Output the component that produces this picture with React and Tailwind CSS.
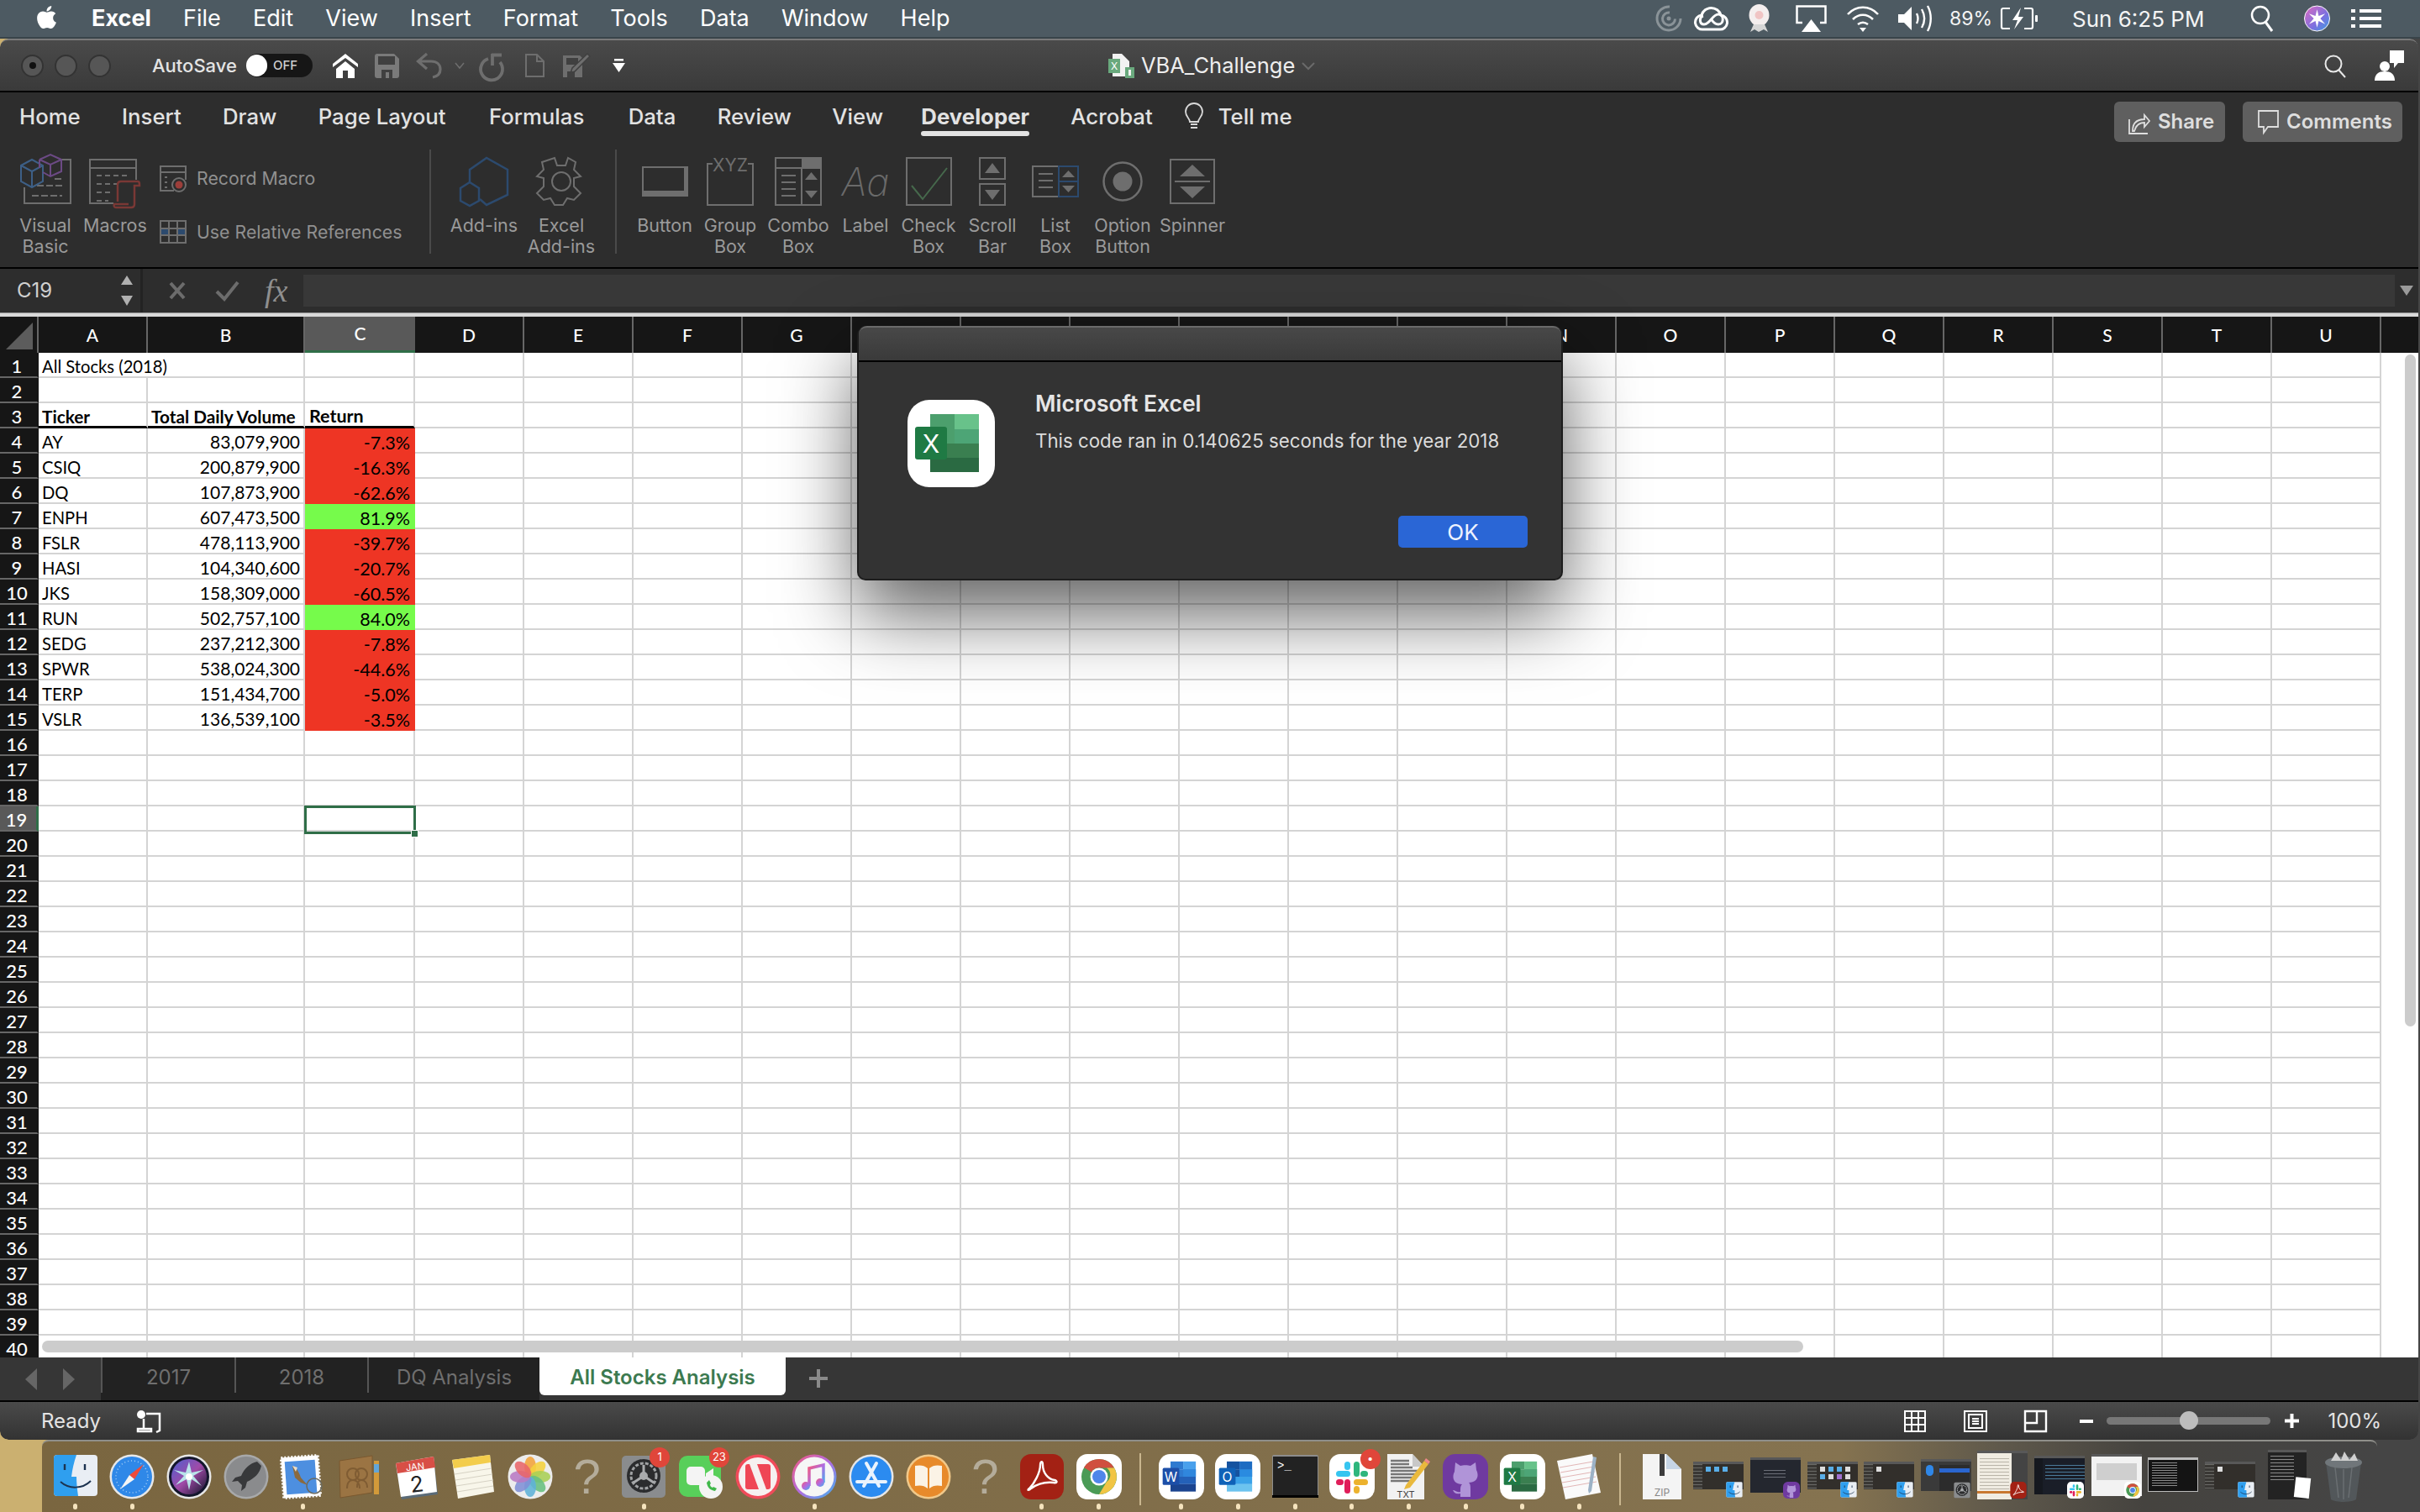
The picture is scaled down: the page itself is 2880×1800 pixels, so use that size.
import React from "react";
import { FaApple } from "react-icons/fa";

const UI = "font-['Inter','Liberation_Sans',sans-serif]";
const G = "#6e6e6e";

const Svg = ({ w, h, vb, children, className = "" }) => (
  <svg width={w} height={h} viewBox={vb || `0 0 ${w} ${h}`} fill="none" className={`shrink-0 overflow-visible ${className}`}>{children}</svg>
);

/* ---------- Office style dock / dialog icon ---------- */
const Office = ({ size = 54, bands, box, letter }) => (
  <Svg w={size} h={size} vb="0 0 104 104">
    <rect x="0" y="0" width="104" height="104" rx="26" fill="#fff" />
    <rect x="27" y="17" width="29" height="18" fill={bands[1]} />
    <rect x="56" y="17" width="29" height="18" fill={bands[0]} />
    <rect x="27" y="35" width="58" height="17" fill={bands[1]} />
    <rect x="56" y="35" width="29" height="17" fill={bands[2]} />
    <rect x="27" y="52" width="58" height="17" fill={bands[3]} />
    <rect x="27" y="69" width="58" height="17" fill={bands[4]} />
    <rect x="9" y="32" width="38" height="39" rx="3" fill={box} />
    <text x="28" y="63" textAnchor="middle" fontSize="30" fontFamily="Inter, sans-serif" fill="#fff">{letter}</text>
  </Svg>
);
const ExcelIco = ({ size }) => <Office size={size} letter="X" box="#1f7a44" bands={["#68c28a", "#4c9f6d", "#4da576", "#3a7f50", "#2a6a42"]} />;

/* ---------- dock icons ---------- */
const D = ({ children }) => <Svg w={54} h={54} vb="0 0 54 54">{children}</Svg>;
const Finder = () => (
  <D>
    <rect x="1" y="1" width="52" height="49" rx="4" fill="#e9eef4" />
    <path d="M5 1h23c-3 9-5 17-6 26h6c0 8 1 15 2 23H5a4 4 0 0 1-4-4V5a4 4 0 0 1 4-4z" fill="#2f9fef" />
    <path d="M14 12v7M38 12v7" stroke="#1c3350" strokeWidth="2.4" />
    <path d="M9 33c10 9 26 9 36-1" stroke="#1c3350" strokeWidth="2" />
  </D>
);
const Safari = () => (
  <D>
    <circle cx="27" cy="27" r="26.5" fill="#e8e8e8" />
    <circle cx="27" cy="27" r="24" fill="#2f88e8" />
    <circle cx="27" cy="27" r="19" stroke="#a8d0f7" strokeWidth="1.5" strokeDasharray="1 3" />
    <path d="M41 12 24 25l6 5z" fill="#ef4a3a" />
    <path d="M13 42l11-17 6 5z" fill="#f5f5f5" />
  </D>
);
const Siri = () => (
  <D>
    <defs>
      <linearGradient id="sg" x1="0" y1="0" x2="1" y2="1"><stop offset="0" stopColor="#4d5fd0" /><stop offset=".5" stopColor="#a04aa8" /><stop offset="1" stopColor="#101528" /></linearGradient>
    </defs>
    <circle cx="27" cy="27" r="26.5" fill="#e6e6e6" />
    <circle cx="27" cy="27" r="24" fill="#13162c" />
    <circle cx="27" cy="27" r="21" fill="url(#sg)" />
    <path d="M27 9l3 13 14-3-12 7 10 12-12-8-3 13-3-13-13 7 10-11-12-7 14 3z" fill="#bdf3ef" opacity=".9" />
    <circle cx="27" cy="27" r="4" fill="#fff" />
  </D>
);
const Launch = () => (
  <D>
    <circle cx="27" cy="27" r="26.5" fill="#a8a9aa" />
    <circle cx="27" cy="27" r="24" fill="#8a8b8d" />
    <path d="M40 9c-9 2-15 8-19 17l-7 2-4 5 7-1 5 5-1 7 5-4 2-7c9-4 15-10 17-19z" fill="#38393b" />
  </D>
);
const Mail = () => (
  <D>
    <rect x="3" y="3" width="44" height="48" fill="#fff" transform="rotate(-4 25 27)" strokeDasharray="2 2" stroke="#fff" strokeWidth="3" />
    <rect x="7" y="8" width="36" height="39" fill="#4d8fe0" transform="rotate(-4 25 27)" />
    <path d="M15 14c5 2 8 8 10 14l8 9-8-3-7-6z" fill="#8a6a3e" />
    <path d="M15 14l6 2-2 5z" fill="#e8dcc8" />
    <circle cx="41" cy="38" r="9" stroke="#6a6a60" strokeWidth="1.5" />
  </D>
);
const Contacts = () => (
  <D>
    <rect x="44" y="8" width="6" height="40" fill="#d39a3a" />
    <rect x="44" y="12" width="6" height="10" fill="#63a6d8" />
    <path d="M3 8l39-6v44L4 52z" fill="#9b7443" stroke="#7a5930" />
    <circle cx="19" cy="24" r="7" stroke="#7f5c33" strokeWidth="2" />
    <circle cx="29" cy="24" r="7" stroke="#7f5c33" strokeWidth="2" />
    <path d="M12 41c0-8 4-10 7-10s8 2 8 10M24 40c0-6 2-9 5-9s7 2 7 9" stroke="#7f5c33" strokeWidth="2" />
  </D>
);
const Calendar = () => (
  <D>
    <path d="M2 12L47 4l5 44-43 6z" fill="#5a6b78" />
    <path d="M2 11L47 3l4 42-43 6z" fill="#fff" />
    <path d="M2 11L47 3l2 13L4 23z" fill="#d84f46" />
    <text x="25" y="19" textAnchor="middle" fontSize="11" fill="#fff" fontFamily="Inter, sans-serif" transform="rotate(-7 25 15)">JAN</text>
    <text x="27" y="45" textAnchor="middle" fontSize="26" fill="#222" fontFamily="Inter, sans-serif" transform="rotate(-7 27 35)">2</text>
  </D>
);
const Notes = () => (
  <D>
    <path d="M2 7L47 1l5 44-43 8z" fill="#f8f6ea" />
    <path d="M2 7L47 1l1 9-44 7z" fill="#f3cd4c" />
    <path d="M5 24l44-7M6 31l44-7M7 38l44-7M8 45l43-7" stroke="#d6d2c4" />
  </D>
);
const Photos = () => {
  const c = ["#f2a33a", "#f5d13e", "#a9cf55", "#67bf7f", "#5fb2d8", "#7f8fd6", "#b87ac4", "#e8656a"];
  return (
    <D>
      <circle cx="27" cy="27" r="26.5" fill="#ececec" />
      {c.map((f, i) => (
        <ellipse key={i} cx="27" cy="15" rx="7" ry="12" fill={f} opacity=".88" transform={`rotate(${i * 45} 27 27)`} />
      ))}
    </D>
  );
};
const Q = () => <span className="text-[58px] leading-[54px] text-[#b4ac9a] font-['Liberation_Sans',sans-serif]">?</span>;
const Prefs = () => (
  <D>
    <rect x="1" y="2" width="52" height="50" rx="5" fill="#8a8c8e" />
    <circle cx="27" cy="26" r="20" fill="#2b2c2e" />
    <circle cx="27" cy="26" r="15" stroke="#a0a2a4" strokeWidth="3" strokeDasharray="4 2" />
    <circle cx="27" cy="26" r="5" fill="#a9abad" />
    <path d="M27 26V13M27 26l12 8M27 26l-12 8" stroke="#a9abad" strokeWidth="3" />
  </D>
);
const Face = () => (
  <D>
    <rect x="1" y="2" width="50" height="49" rx="10" fill="#58cf5a" />
    <rect x="10" y="15" width="22" height="22" rx="5" fill="#f4f4f4" />
    <path d="M33 23l9-6v18l-9-6z" fill="#f4f4f4" />
    <circle cx="39" cy="39" r="14" fill="#f4f4f4" />
    <path d="M34 34c1 6 4 9 10 10l2-3-4-2-1 1c-2-1-3-2-3-4l1-1-2-4z" fill="#3fb84a" />
  </D>
);
const News = () => (
  <D>
    <circle cx="27" cy="27" r="26.5" fill="#f04b5a" />
    <circle cx="27" cy="27" r="23" fill="#f6f0f0" />
    <rect x="12" y="12" width="30" height="30" rx="3" fill="#ef4655" />
    <path d="M17 12h9l11 30h-9z" fill="#f6f0f0" />
  </D>
);
const Music = () => (
  <D>
    <defs>
      <linearGradient id="mg" x1="0" y1="0" x2="1" y2="1"><stop offset="0" stopColor="#f25a7c" /><stop offset=".5" stopColor="#b26be0" /><stop offset="1" stopColor="#3cb4ef" /></linearGradient>
    </defs>
    <circle cx="27" cy="27" r="26.5" fill="url(#mg)" />
    <circle cx="27" cy="27" r="23.5" fill="#f6f6f6" />
    <path d="M21 38V17l17-4v21" stroke="url(#mg)" strokeWidth="3.5" />
    <circle cx="17" cy="38" r="5" fill="url(#mg)" />
    <circle cx="34" cy="34" r="5" fill="url(#mg)" />
  </D>
);
const AppStore = () => (
  <D>
    <circle cx="27" cy="27" r="26.5" fill="#e6e6e6" />
    <circle cx="27" cy="27" r="24" fill="#2b8bf0" />
    <path d="M21 11l15 27M33 11L18 38M10 33h34" stroke="#eaf3fd" strokeWidth="4" strokeLinecap="round" />
  </D>
);
const Books = () => (
  <D>
    <circle cx="27" cy="27" r="26.5" fill="#f1c98a" />
    <circle cx="27" cy="27" r="24" fill="#e78a2b" />
    <path d="M26 17c-4-4-10-4-15-3v24c5-1 11-1 15 3zM28 17c4-4 10-4 15-3v24c-5-1-11-1-15 3z" fill="#fbf3e6" />
  </D>
);
const Acrobat = () => (
  <D>
    <rect x="1" y="0" width="52" height="54" rx="13" fill="#a32114" />
    <path d="M12 41c6-6 13-19 13-28 0-5 3-5 3 0 0 9 6 17 14 18 4 1 3 4-1 3-9-1-19 1-27 7-3 3-5 2-2 0z" stroke="#fff" strokeWidth="2.4" />
  </D>
);
const Chrome = () => (
  <D>
    <rect x="0" y="0" width="54" height="54" rx="13" fill="#fff" />
    <circle cx="27" cy="27" r="21" fill="#4a9b56" />
    <path d="M27 6a21 21 0 0 1 18 10.500H27a10 10 0 0 0-9 5L9 16a21 21 0 0 1 18-10z" fill="#d0503f" />
    <path d="M45 16.500A21 21 0 0 1 27 48l9-15a10 10 0 0 0 0-16.500z" fill="#f1c544" />
    <circle cx="27" cy="27" r="10.500" fill="#fff" />
    <circle cx="27" cy="27" r="8" fill="#4f86ea" />
  </D>
);
const Word = () => <Office letter="W" box="#1d4fa8" bands={["#49a0ec", "#2e7ad0", "#3087dd", "#2461b8", "#1b448f"]} />;
const Outlook = () => <Office letter="O" box="#0f62b8" bands={["#1d6cc2", "#1553a0", "#2a8be0", "#3aa2e8", "#6cc3ef"]} />;
const Term = () => (
  <D>
    <rect x="0" y="1" width="55" height="50" rx="2" fill="#8d8d8d" />
    <rect x="1" y="3" width="53" height="48" fill="#222" />
    <rect x="0" y="49" width="55" height="3" fill="#000" />
    <text x="6" y="18" fontSize="14" fill="#fff" fontFamily="'Liberation Mono', monospace">&gt;_</text>
  </D>
);
const Slack = () => (
  <D>
    <rect x="0" y="0" width="54" height="54" rx="13" fill="#fff" />
    <rect x="8" y="20" width="17" height="7" rx="3.500" fill="#36c5f0" />
    <rect x="18" y="9" width="7" height="10" rx="3.500" fill="#36c5f0" />
    <rect x="29" y="9" width="7" height="18" rx="3.500" fill="#2eb67d" />
    <rect x="37" y="20" width="9" height="7" rx="3.500" fill="#2eb67d" />
    <rect x="29" y="30" width="17" height="7" rx="3.500" fill="#ecb22e" />
    <rect x="29" y="38" width="7" height="9" rx="3.500" fill="#ecb22e" />
    <rect x="18" y="30" width="7" height="17" rx="3.500" fill="#e01e5a" />
    <rect x="8" y="30" width="9" height="7" rx="3.500" fill="#e01e5a" />
  </D>
);
const Txt = () => (
  <D>
    <path d="M2 0h30l14 15v39H2z" fill="#f2f2f2" />
    <path d="M32 0l14 15H32z" fill="#c8c8c8" />
    <path d="M6 8h22M6 12h22M6 16h26M6 20h34M6 24h34M6 28h30M6 32h26" stroke="#777" strokeWidth="2.4" />
    <path d="M24 37L46 8l5 4-22 28-7 2z" fill="#e9b93d" />
    <path d="M46 8l5 4 2-3-5-4z" fill="#e88" />
    <text x="24" y="52" textAnchor="middle" fontSize="11" fill="#444" fontFamily="Inter, sans-serif">TXT</text>
  </D>
);
const GH = () => (
  <D>
    <rect x="0" y="0" width="54" height="54" rx="15" fill="#6f3aa0" />
    <path d="M15 10l6 4c3-1 9-1 12 0l6-4 1 9c4 8 0 15-9 15 2 2 2 4 2 9v8h-12v-4c-5 1-7 0-9-4 3 0 4 3 9 2v-2c0-3 0-5 2-7-9 0-13-7-9-15z" fill="#b094d8" />
  </D>
);
const TextEdit = () => (
  <D>
    <path d="M1 8L43 0l10 46-42 8z" fill="#fafafa" />
    <path d="M4 16l40-7M5 22l40-7M6 28l40-7M7 34l40-7M8 40l40-7" stroke="#e2b6b6" strokeWidth="1" />
    <path d="M44 3l4 1-6 40-3 3-1-4z" fill="#9cb2c6" />
  </D>
);
const Zip = () => (
  <Svg w={46} h={54} vb="0 0 46 54">
    <path d="M0 0h28l18 18v36H0z" fill="#f4f4f4" />
    <path d="M28 0l18 18H28z" fill="#c6d5e6" />
    <rect x="20" y="0" width="6" height="26" fill="#3c3c3c" />
    <text x="23" y="50" textAnchor="middle" fontSize="12" fill="#888" fontFamily="Inter, sans-serif">ZIP</text>
  </Svg>
);
const Trash = () => (
  <Svg w={46} h={62} vb="0 0 46 62">
    <path d="M2 14l6 44c6 4 24 4 30 0l6-44z" fill="#52575a" />
    <ellipse cx="23" cy="14" rx="22" ry="7" fill="#70767a" />
    <path d="M8 12l6-10 6 9 4-10 6 10 6-8 4 9z" fill="#d0d0d0" />
    <path d="M13 20l4 36M23 22v36M33 20l-4 36" stroke="#6a6f72" strokeWidth="1.5" />
  </Svg>
);
const Badge = ({ t, cls }) => (
  <span className={`absolute flex items-center justify-center rounded-full bg-[#e0463a] text-white text-[13px] h-[24px] min-w-[24px] ${cls} ${UI}`}>{t}</span>
);

/* window thumbnails in the dock */
const Mini = ({ children }) => <span className="block w-[20px] h-[20px] [&>svg]:w-[20px] [&>svg]:h-[20px]">{children}</span>;
const Win = ({ cls, app, children }) => (
  <div className="relative w-[60px] h-[54px]">
    <div className={`w-[60px] flex overflow-hidden border-t-[3px] border-[#585858] ${cls}`}>{children}</div>
    {app && <div className="absolute right-[1px] bottom-[1px]">{app}</div>}
  </div>
);
const Side = () => <div className="w-[11px] h-full shrink-0 bg-[repeating-linear-gradient(180deg,#6a6a66_0px,#6a6a66_1px,#3a3835_1px,#3a3835_4px)]" />;
const Cells = ({ c }) => (
  <div className="flex flex-wrap content-start gap-x-[4px] gap-y-[3px] pl-[4px] pt-[3px]">
    {c.map((x, i) => <span key={i} className="w-[6px] h-[6px]" style={{ backgroundColor: x }} />)}
  </div>
);
const FinderWin = ({ c }) => <Win cls="h-[33px] mt-[9px] bg-[#322f2b]" app={<Mini><Finder /></Mini>}><Side /><Cells c={c} /></Win>;

const Sep = () => <div className="w-[30.5px] flex justify-center"><span className="w-[2px] h-[62px] mt-[14px] bg-[#c9b68e]" /></div>;
const Slot = ({ icon, dot, badge }) => (
  <div className="w-[67.67px] flex flex-col items-center relative">
    <div className="h-[54px] mt-[15px] flex items-center justify-center">{icon}</div>
    <span className={`w-[5px] h-[7px] mt-[5px] rounded-full ${dot ? "bg-[#f5e3bd]" : ""}`} />
    {badge}
  </div>
);

const Dock = () => {
  const a = [
    [<Finder />, 1], [<Safari />, 1], [<Siri />, 0], [<Launch />, 0], [<Mail />, 1], [<Contacts />, 0], [<Calendar />, 0], [<Notes />, 0], [<Photos />, 0], [<Q />, 0],
    [<Prefs />, 1, <Badge t="1" cls="right-[3px] top-[7px]" />], [<Face />, 0, <Badge t="23" cls="right-[0px] top-[7px]" />], [<News />, 0], [<Music />, 1], [<AppStore />, 0], [<Books />, 0], [<Q />, 0], [<Acrobat />, 1], [<Chrome />, 1],
  ];
  const b = [
    [<Word />, 1], [<Outlook />, 1], [<Term />, 1], [<Slack />, 1, <Badge t="•" cls="right-[0px] top-[9px]" />], [<Txt />, 1], [<GH />, 1], [<ExcelIco size={54} />, 1], [<TextEdit />, 1],
  ];
  const c = [
    [<Zip />],
    [<FinderWin c={["#59aee8", "#59aee8", "#59aee8"]} />],
    [<Win cls="h-[42px] mt-[4px] bg-[#24272f]" app={<Mini><GH /></Mini>}><div className="w-full h-full pt-[12px] pl-[16px]"><div className="w-[26px] h-[10px] bg-[repeating-linear-gradient(180deg,#6c6f78_0px,#6c6f78_1px,transparent_1px,transparent_4px)]" /></div></Win>],
    [<FinderWin c={["#ddd", "#59aee8", "#59aee8", "#ddd", "#59aee8", "#ddd", "#a070d0", "#ddd"]} />],
    [<FinderWin c={["#ddd"]} />],
    [<Win cls="h-[38px] mt-[6px] bg-[#3a3a3a]" app={<Mini><Prefs /></Mini>}><div className="w-[22px] shrink-0 flex justify-center pt-[4px]"><span className="w-[9px] h-[13px] rounded-full bg-[#2f87e8]" /></div><div className="flex-1 h-full bg-[#2c2c2c] mr-[2px] mt-[4px]"><div className="h-[5px] mt-[4px] bg-[#2a66d0]" /></div></Win>],
    [<Win cls="h-[58px] mt-[-4px] bg-[#444]" app={<Mini><Acrobat /></Mini>}><div className="w-[41px] h-full shrink-0 bg-[#f0ece2] flex flex-col pt-[6px]"><div className="flex-1 mx-[3px] bg-[repeating-linear-gradient(180deg,#b9b4a8_0px,#b9b4a8_1px,transparent_1px,transparent_4px)]" /><div className="h-[3px] mt-[2px] mb-[7px] bg-[#c87830]" /></div></Win>],
    [<Win cls="h-[46px] mt-[2px] bg-[#1a1e28]" app={<Mini><Slack /></Mini>}><div className="w-[10px] h-full shrink-0 bg-[#15181f]" /><div className="flex-1 ml-[3px] mt-[8px] h-[18px] bg-[repeating-linear-gradient(180deg,#4a7a9a_0px,#4a7a9a_1px,transparent_1px,transparent_4px)]" /></Win>],
    [<Win cls="h-[50px] bg-[#f2f2f2]" app={<Mini><Chrome /></Mini>}><div className="w-full h-full pt-[8px] px-[6px]"><div className="h-[20px] bg-[#cfcfcf]" /></div></Win>],
    [<Win cls="h-[41px] mt-[4px] bg-[#141414] border-x border-b border-[#bbbbbb] border-t-[#bbbbbb]"><div className="w-[30px] h-[30px] ml-[4px] mt-[3px] bg-[repeating-linear-gradient(180deg,#8a8a8a_0px,#8a8a8a_1px,transparent_1px,transparent_3px)]" /></Win>],
    [<FinderWin c={["#ddd"]} />],
    [<div className="relative w-[46px] h-[59px] mt-[-5px] bg-[#232323] border-t-[3px] border-[#585858]"><div className="w-[28px] h-[32px] ml-[3px] mt-[4px] bg-[repeating-linear-gradient(180deg,#8a8a8a_0px,#8a8a8a_1px,transparent_1px,transparent_4px)]" /><span className="absolute right-[-4px] bottom-[2px] w-[18px] h-[24px] bg-white rotate-6" /></div>],
    [<Trash />],
  ];
  const r = (l) => l.map((x, i) => <Slot key={i} icon={x[0]} dot={x[1]} badge={x[2]} />);
  return (
    <div className="ml-[50px] w-[2779px] h-[86px] pl-[6px] flex rounded-t-[8px] border-t-2 border-[#8f8f8a] bg-[linear-gradient(90deg,#7a6640_0%,#857350_77%,#5e584b_84%,#45433f_90%,#454545_100%)]">
      {r(a)}<Sep />{r(b)}<Sep />{r(c)}
    </div>
  );
};

/* ---------- menu bar ---------- */
const MB = () => (
  <div className={`h-[44px] shrink-0 flex items-center pl-[40px] pr-[46px] bg-[#4d5a62] text-white text-[27px] ${UI}`}>
    <FaApple size={31} className="mb-[4px]" />
    <div className="flex ml-[38px] gap-[38.200px] font-normal">
      <span className="font-bold">Excel</span>
      {["File", "Edit", "View", "Insert", "Format", "Tools", "Data", "Window", "Help"].map((t) => <span key={t}>{t}</span>)}
    </div>
    <div className="ml-auto flex items-center text-[25px] text-[#f4f4f4]">
      <Svg w={32} h={32} vb="0 0 32 32"><path d="M17 2a14 14 0 1 0 13 14M17 9a7.500 7.500 0 1 0 6.500 7.500" stroke="#8a9398" strokeWidth="3" /><circle cx="16" cy="16" r="2.500" fill="#8a9398" /></Svg>
      <Svg w={39} h={30} className="ml-[15px]" vb="0 0 39 30"><path d="M10 28a8.500 8.500 0 0 1-2-17 12 12 0 0 1 23 0 8.500 8.500 0 0 1-2 17z" stroke="#fff" strokeWidth="3" /><path d="M10 12c-5 1-5 10 1 10 7 0 10-12 17-12 7 0 7 12 0 12-5 0-7-4-9-7" stroke="#fff" strokeWidth="3" /></Svg>
      <Svg w={31} h={34} className="ml-[22px]" vb="0 0 31 34"><ellipse cx="15.500" cy="13" rx="12" ry="13" fill="#f4eeee" /><path d="M5 33l4-9h13l4 9-5-3-6 3-5-3z" fill="#d6d6d6" /><circle cx="15.500" cy="13" r="5" fill="#f0c4c4" /></Svg>
      <Svg w={37} h={32} className="ml-[28px]" vb="0 0 37 32"><path d="M8 21H1.500V1.500h34V21H29" stroke="#fff" strokeWidth="2.500" /><path d="M18.500 17L30 32H7z" fill="#fff" /></Svg>
      <Svg w={40} h={32} className="ml-[23px]" vb="0 0 40 32"><path d="M2 11c10-11 26-11 36 0M8 17c7-7 17-7 24 0M14 23c4-3 8-3 12 0" stroke="#fff" strokeWidth="2.600" /><path d="M20 32l-4-5h8z" fill="#fff" /></Svg>
      <Svg w={40} h={32} className="ml-[21px]" vb="0 0 40 32"><path d="M1 11h7l9-9v28l-9-9H1z" fill="#fff" /><path d="M23 10c2 4 2 8 0 12M29 5c4 7 4 15 0 22M36 1c5 9 5 21 0 30" stroke="#fff" strokeWidth="2.400" /></Svg>
      <span className="ml-[22px] w-[50px] text-[23px]">89%</span>
      <Svg w={44} h={28} className="ml-[11px]" vb="0 0 44 28"><path d="M11 2H3a2 2 0 0 0-2 2v20a2 2 0 0 0 2 2h8M28 2h8a2 2 0 0 1 2 2v20a2 2 0 0 1-2 2h-8" stroke="#fff" strokeWidth="2.200" /><path d="M24 1l-10 15h6l-4 11 11-15h-6z" fill="#fff" /><rect x="41" y="10" width="3" height="8" rx="1" fill="#fff" /></Svg>
      <span className="ml-[41px] w-[164px] whitespace-nowrap text-[26px]">Sun 6:25 PM</span>
      <Svg w={28} h={32} className="ml-[48px]" vb="0 0 28 32"><circle cx="12" cy="12" r="10" stroke="#fff" strokeWidth="2.500" /><path d="M18 20l8 11" stroke="#fff" strokeWidth="3" /></Svg>
      <Svg w={31} h={32} className="ml-[36px]" vb="0 0 32 32"><defs><linearGradient id="sr" x1="0" y1="0" x2="1" y2="1"><stop offset="0" stopColor="#e06ac0" /><stop offset=".6" stopColor="#7a70e0" /><stop offset="1" stopColor="#3aa0e0" /></linearGradient></defs><circle cx="16" cy="16" r="15.500" fill="url(#sr)" stroke="#fff" /><path d="M16 5l2 8 8-3-6 6 6 7-8-4-2 8-2-8-8 4 6-7-6-6 8 3z" fill="#fff" /></Svg>
      <Svg w={36} h={24} className="ml-[25px]" vb="0 0 36 24"><path d="M10 3h26M10 12h26M10 21h26" stroke="#fff" strokeWidth="4" /><path d="M0 3h5M0 12h5M0 21h5" stroke="#fff" strokeWidth="4" /></Svg>
    </div>
  </div>
);

/* ---------- title bar ---------- */
const TL = ({ dot }) => (
  <span className="w-[27px] h-[27px] rounded-full bg-[#565656] border-2 border-[#333] flex items-center justify-center">
    {dot && <span className="w-[8px] h-[8px] rounded-full bg-[#111]" />}
  </span>
);
const TitleBar = () => (
  <div className={`h-[64px] shrink-0 flex items-center pl-[25px] pr-[17px] border-t-2 border-[#7a7a7a] border-b-2 border-b-[#000] rounded-t-[10px] bg-[linear-gradient(#4a4a4a,#3a3a3a)] ${UI}`}>
    <div className="flex gap-[13px]"><TL dot /><TL /><TL /></div>
    <span className="ml-[49px] w-[100px] text-[22px] font-medium text-[#e4e4e4] whitespace-nowrap">AutoSave</span>
    <span className="ml-[12px] w-[79px] h-[28px] rounded-full bg-[#161616] flex items-center">
      <span className="w-[25px] h-[26px] rounded-full bg-white" />
      <span className="ml-[7px] text-[15px] font-medium text-[#cfcfcf]">OFF</span>
    </span>
    <Svg w={32} h={30} className="ml-[23px]" vb="0 0 32 30"><path d="M1 13L16 1l15 12v4L16 6 1 17z" fill="#fff" /><path d="M5 19l11-9 11 9v11h-8v-9h-6v9H5z" fill="#fff" /></Svg>
    <Svg w={29} h={29} className="ml-[19px]" vb="0 0 29 29"><path d="M3 0h20l6 6v20a3 3 0 0 1-3 3H3a3 3 0 0 1-3-3V3a3 3 0 0 1 3-3z" fill="#7a7a7a" /><rect x="4" y="3" width="20" height="10" fill="#404040" /><rect x="8" y="19" width="13" height="10" fill="#404040" /><rect x="13" y="22" width="4" height="7" fill="#7a7a7a" /></Svg>
    <Svg w={32} h={30} className="ml-[20px]" vb="0 0 32 30"><path d="M13 1L2.500 10 13 19M3 10h15c7 0 11 4 11 9.500S25 28 20 29" stroke={G} strokeWidth="3.200" /></Svg>
    <Svg w={12} h={8} className="ml-[14px]" vb="0 0 12 8"><path d="M1 1l5 6 5-6" stroke={G} strokeWidth="1.500" /></Svg>
    <Svg w={30} h={32} className="ml-[17px]" vb="0 0 30 32"><path d="M16 2v14M15 3.500h12M11 8A13 13 0 1 0 25 12" stroke={G} strokeWidth="3.800" /></Svg>
    <Svg w={23} h={28} className="ml-[25px]" vb="0 0 23 28"><path d="M1 1h13l8 8v18H1z" stroke={G} strokeWidth="2" /><path d="M14 1v8h8" stroke={G} strokeWidth="2" /></Svg>
    <Svg w={35} h={30} className="ml-[21px]" vb="0 0 35 30"><path d="M1 3h20l3 3v23H1z" fill={G} /><rect x="5" y="6" width="14" height="8" fill="#404040" /><path d="M33 4L15 22l-5 2 2-6L30 1z" fill={G} stroke="#404040" strokeWidth="1.500" /><rect x="6" y="22" width="9" height="7" fill="#404040" /></Svg>
    <Svg w={15} h={16} className="ml-[25px]" vb="0 0 15 16"><rect x="2" y="0" width="11" height="2.500" fill="#fff" /><path d="M0 5h15l-7.500 11z" fill="#fff" /></Svg>
    <Svg w={32} h={30} className="ml-[575px]" vb="0 0 32 30"><path d="M5 1h11l9 9v18H5z" fill="#f2f2f2" /><rect x="0" y="7" width="14" height="17" fill="#69a97d" /><text x="7" y="20" textAnchor="middle" fontSize="12" fill="#fff" fontFamily="Inter, sans-serif">X</text><rect x="20" y="17" width="11" height="13" fill="#69a97d" /><rect x="24" y="20" width="3" height="7" fill="#f2f2f2" /></Svg>
    <span className="ml-[7px] text-[25.500px] text-[#eeeeee] whitespace-nowrap">VBA_Challenge</span>
    <Svg w={16} h={9} className="ml-[8px]" vb="0 0 16 9"><path d="M1 1l7 7 7-7" stroke="#6a6a6a" strokeWidth="2" /></Svg>
    <div className="ml-auto flex items-center">
      <Svg w={26} h={27} vb="0 0 26 27"><circle cx="11" cy="11" r="9.500" stroke="#e8e8e8" strokeWidth="2" /><path d="M17 18l8 9" stroke="#e8e8e8" strokeWidth="2" /></Svg>
      <Svg w={36} h={36} className="ml-[33px]" vb="0 0 36 36"><circle cx="13" cy="19" r="6" fill="#fff" /><path d="M1 36c0-8 5-11 12-11s12 3 12 11z" fill="#fff" /><path d="M19 0h17v15h-7l-5 6v-6h-5z" fill="#fff" /></Svg>
    </div>
  </div>
);

/* ---------- ribbon ---------- */
const S = { stroke: G, strokeWidth: 2 };
const Lines = ({ x, y, n, w, gap = 8 }) => Array.from({ length: n }).map((_, i) => <path key={i} d={`M${x} ${y + i * gap}h${w}`} stroke={G} strokeWidth="2" />);
const icons = {
  vb: (
    <Svg w={61} h={58}>
      <path d="M49 3h11v52H5V36" {...S} />
      <path d="M41 26h10M20 34h30M14 46h36" stroke={G} strokeWidth="2" strokeDasharray="8 3" />
      <path d="M1 10l13-7 13 7v19l-13 7-13-7zM1 10l13 7 13-7M14 17v19" stroke="#3d5f86" strokeWidth="2" />
      <path d="M23 3l13-6 13 6v14l-13 6-9-5M23 3l13 6 13-6M36 9v14M23 3v10" stroke="#6c4a85" strokeWidth="2" />
    </Svg>
  ),
  mac: (
    <Svg w={60} h={58}>
      <path d="M28 55H0V3h55v24" {...S} /><path d="M0 13h55" {...S} />
      <path d="M8 22h40M8 32h26M8 42h20M8 52h14" stroke={G} strokeWidth="2" strokeDasharray="6 4" />
      <path d="M33 53V33c0-2 1-4 4-4h20c2 0 2 2 2 5h-6v22c0 3-2 4-4 4H31c-2 0-3-2-2-4h17" stroke="#7a3835" strokeWidth="2.500" />
    </Svg>
  ),
  rec: (
    <Svg w={32} h={32}>
      <path d="M17 30H1V1h30v16" {...S} /><path d="M1 8h30" {...S} /><path d="M6 14h3M6 20h3M6 26h3" {...S} />
      <circle cx="23" cy="23" r="8" {...S} /><circle cx="23" cy="23" r="4.500" fill="#9c3e3a" />
    </Svg>
  ),
  rel: (
    <Svg w={32} h={28}>
      <rect x="1" y="1" width="30" height="26" {...S} /><rect x="2" y="10" width="9" height="8" fill="#2c4a6e" /><rect x="21" y="10" width="9" height="8" fill="#2c4a6e" />
      <path d="M11 1v26M21 1v26M1 10h30M1 18h30" {...S} />
    </Svg>
  ),
  add: (
    <Svg w={58} h={58}>
      <path d="M12 30V15L32 1l25 14v30L32 57 24 50" stroke="#2c4a6e" strokeWidth="2.500" />
      <path d="M12 30l11 7v15l-11 6L1 52V37z" stroke="#2c4a6e" strokeWidth="2.500" />
    </Svg>
  ),
  gear: (
    <Svg w={56} h={58}>
      <path d="M20 1l3 9h10l3-9 9 5-2 9 8 8-8 2v10l8 8-8 8-8-2-5 8h-10l-5-8-8 2-8-8 8-8V25l-8-2 8-8-2-9z" stroke={G} strokeWidth="2" />
      <circle cx="28" cy="29" r="11" stroke={G} strokeWidth="2" />
    </Svg>
  ),
  btn: (
    <Svg w={55} h={36}>
      <rect x="1" y="1" width="53" height="34" {...S} /><rect x="0" y="29" width="55" height="7" fill={G} /><rect x="50" y="1" width="5" height="34" fill={G} />
    </Svg>
  ),
  grp: (
    <Svg w={56} h={58}>
      <path d="M7 8H1v49h54V8h-6" {...S} />
      <text x="28" y="17" textAnchor="middle" fontSize="21" fill={G} fontFamily="Inter, sans-serif">XYZ</text>
    </Svg>
  ),
  cmb: (
    <Svg w={56} h={58}>
      <rect x="1" y="1" width="54" height="56" {...S} /><rect x="32" y="1" width="23" height="12" fill={G} /><path d="M1 13h54M32 13v44" {...S} />
      <Lines x={8} y={22} n={4} w={17} />
      <path d="M36 27h15l-7.500-9zM36 40h15l-7.500 9z" fill={G} />
    </Svg>
  ),
  lab: <span className="text-[46px] leading-[58px] italic font-extralight text-[#6a6a6a] font-['Inter',sans-serif]">Aa</span>,
  chk: (
    <Svg w={55} h={58}>
      <rect x="1" y="1" width="53" height="56" {...S} /><path d="M7 34l13 16L49 13" stroke="#46694c" strokeWidth="2" />
    </Svg>
  ),
  scr: (
    <Svg w={32} h={58}>
      <rect x="1" y="1" width="30" height="25" {...S} /><rect x="1" y="32" width="30" height="25" {...S} />
      <path d="M7 19h18L16 7zM7 39h18l-9 12z" fill={G} />
    </Svg>
  ),
  lst: (
    <Svg w={56} h={38}>
      <rect x="1" y="1" width="54" height="36" {...S} /><Lines x={8} y={10} n={3} w={17} />
      <path d="M32 1h23v36H32zM32 19h23" stroke="#2c4a6e" strokeWidth="2" />
      <path d="M36 14h15l-7.500-8zM36 24h15l-7.500 8z" fill={G} />
    </Svg>
  ),
  opt: (
    <Svg w={48} h={48}><circle cx="24" cy="24" r="22.500" stroke={G} strokeWidth="2.500" /><circle cx="24" cy="24" r="11.500" fill={G} /></Svg>
  ),
  spn: (
    <Svg w={54} h={54}>
      <rect x="1" y="1" width="52" height="52" {...S} /><path d="M6 27h42" {...S} />
      <path d="M12 21h30L27 7zM12 33h30L27 47z" fill={G} />
    </Svg>
  ),
};
const RB = ({ w, icon, a, b }) => (
  <div className={`${w} shrink-0 flex flex-col items-center`}>
    <div className="h-[58px] flex items-center justify-center">{icons[icon]}</div>
    <div className="mt-[11px] text-center text-[21.500px] leading-[25px] text-[#9a9a9a] whitespace-nowrap">{a}<br />{b}</div>
  </div>
);
const VSep = () => <span className="block w-[2px] h-[124px] mt-[-9px] bg-[#4a4a4a]" />;

const TABS = [
  ["Home", ""], ["Insert", ""], ["Draw", ""], ["Page Layout", ""],
  ["Formulas", "ml-[2px]"], ["Data", "ml-[3px]"], ["Review", ""], ["View", "ml-[-1px]"],
];

const Ribbon = () => (
  <div className={`h-[210px] shrink-0 bg-[#2d2d2d] border-b-2 border-black ${UI}`}>
    <div className="h-[58px] flex items-center pl-[23px] pr-[19px] relative">
      <div className="flex items-center gap-[49.300px] text-[25.750px] font-medium text-[#e2e2e2]">
        {TABS.map(([t, m]) => <span key={t} className={m}>{t}</span>)}
        <span className="relative font-bold ml-[-4px]">Developer<span className="absolute left-0 right-0 top-[36px] h-[6px] rounded-full bg-[#e2e2e2]" /></span>
        <span>Acrobat</span>
      </div>
      <Svg w={22} h={30} className="ml-[38px]" vb="0 0 22 30"><path d="M6 21c0-4-5-6-5-12a10 10 0 0 1 20 0c0 6-5 8-5 12z" stroke="#d8d8d8" strokeWidth="1.800" /><path d="M7 24h8M7 28h8" stroke="#d8d8d8" strokeWidth="2" /></Svg>
      <span className="ml-[18px] text-[25.750px] font-medium text-[#e2e2e2]">Tell me</span>
      <div className="ml-auto mt-[11px] flex gap-[21px] text-[24px] font-semibold text-[#dedede]">
        <span className="w-[132px] h-[48px] rounded-[6px] bg-[#5f5f5f] flex items-center pl-[17px]">
          <Svg w={26} h={30} vb="0 0 26 30"><path d="M1 12v17h22M5 26c0-9 5-14 14-14V7l6 7-6 7v-5c-6 0-10 3-12 10z" stroke="#dedede" strokeWidth="1.800" /></Svg>
          <span className="ml-[9px]">Share</span>
        </span>
        <span className="w-[190px] h-[48px] rounded-[6px] bg-[#5f5f5f] flex items-center pl-[18px]">
          <Svg w={25} h={28} vb="0 0 25 28"><path d="M1 1h23v19H12l-5 7v-7H1z" stroke="#dedede" strokeWidth="1.800" /></Svg>
          <span className="ml-[9px] whitespace-nowrap">Comments</span>
        </span>
      </div>
    </div>
    <div className="flex pl-[14px] pt-[19px]">
      <RB w="w-[80px]" icon="vb" a="Visual" b="Basic" />
      <RB w="w-[86px]" icon="mac" a="Macros" b="" />
      <div className="ml-[10px] w-[321px] pt-[9px] text-[21.300px] text-[#909090]">
        <div className="h-[33px] flex items-center">{icons.rec}<span className="ml-[12px]">Record Macro</span></div>
        <div className="h-[28px] mt-[33px] flex items-center">{icons.rel}<span className="ml-[12px] pt-[1px]">Use Relative References</span></div>
      </div>
      <VSep />
      <div className="ml-[13px] flex">
        <RB w="w-[100px]" icon="add" a="Add-ins" b="" />
        <RB w="w-[84px]" icon="gear" a="Excel" b="Add-ins" />
      </div>
      <div className="ml-[22px]"><VSep /></div>
      <div className="ml-[12px] flex">
        <RB w="w-[90px]" icon="btn" a="Button" b="" />
        <RB w="w-[66px]" icon="grp" a="Group" b="Box" />
        <RB w="w-[96px]" icon="cmb" a="Combo" b="Box" />
        <RB w="w-[64px]" icon="lab" a="Label" b="" />
        <RB w="w-[86px]" icon="chk" a="Check" b="Box" />
        <RB w="w-[66px]" icon="scr" a="Scroll" b="Bar" />
        <RB w="w-[84px]" icon="lst" a="List" b="Box" />
        <RB w="w-[76px]" icon="opt" a="Option" b="Button" />
        <RB w="w-[90px]" icon="spn" a="Spinner" b="" />
      </div>
    </div>
  </div>
);

/* ---------- formula bar ---------- */
const Formula = () => (
  <div className={`h-[52px] shrink-0 flex items-center bg-[#2d2d2d] ${UI}`}>
    <div className="w-[170px] h-full shrink-0 flex items-center pl-[20px] border-r-[3px] border-[#232323] relative">
      <span className="text-[24px] text-[#d0d0d0]">C19</span>
      <Svg w={16} h={36} className="ml-auto mr-[8px]" vb="0 0 16 36"><path d="M1 11h14L8 0zM1 24h14L8 36z" fill="#b0b0b0" /></Svg>
    </div>
    <Svg w={22} h={22} className="ml-[30px]" vb="0 0 22 22"><path d="M3 2l16 18M19 2L3 20" stroke="#6c6c6c" strokeWidth="4" /></Svg>
    <Svg w={29} h={24} className="ml-[34px]" vb="0 0 29 24"><path d="M2 13l9 9L27 2" stroke="#6c6c6c" strokeWidth="4" /></Svg>
    <span className="ml-[30px] w-[31px] text-[38px] leading-[44px] italic text-[#8f8f8f] font-['Liberation_Serif',serif]">fx</span>
    <div className="ml-[15px] w-[2489px] h-[38px] bg-[#383838]" />
    <Svg w={16} h={12} className="ml-[6px]" vb="0 0 16 12"><path d="M0 0h16L8 12z" fill="#9a9a9a" /></Svg>
  </div>
);

/* ---------- sheet ---------- */
const data = {
  4: ["AY", "83,079,900", "-7.3%"], 5: ["CSIQ", "200,879,900", "-16.3%"], 6: ["DQ", "107,873,900", "-62.6%"], 7: ["ENPH", "607,473,500", "81.9%"],
  8: ["FSLR", "478,113,900", "-39.7%"], 9: ["HASI", "104,340,600", "-20.7%"], 10: ["JKS", "158,309,000", "-60.5%"], 11: ["RUN", "502,757,100", "84.0%"],
  12: ["SEDG", "237,212,300", "-7.8%"], 13: ["SPWR", "538,024,300", "-44.6%"], 14: ["TERP", "151,434,700", "-5.0%"], 15: ["VSLR", "136,539,100", "-3.5%"],
};
const LET = "DEFGHIJKLMNOPQRSTU".split("");
const LN = "border-[#d4d4d4]";

const HeaderRow = () => (
  <div className="h-[43px] shrink-0 flex bg-[#161616] text-white text-[21px] font-['Lato',sans-serif] font-medium relative">
    <div className="w-[46px] shrink-0 border-r-2 border-[#666] flex items-end justify-end pr-[5px] pb-[4px]">
      <Svg w={32} h={32} vb="0 0 32 32"><path d="M32 0v32H0z" fill="#5c5c5c" /></Svg>
    </div>
    <div className="w-[130px] shrink-0 border-r-2 border-[#666] flex items-center justify-center">A</div>
    <div className="w-[187px] shrink-0 border-r-2 border-[#666] flex items-center justify-center">B</div>
    <div className="w-[131px] shrink-0 bg-[#595959] border-b-[3px] border-[#2f6e48] flex items-center justify-center">C</div>
    {LET.map((l) => <div key={l} className="w-[130px] shrink-0 border-r-2 border-[#666] flex items-center justify-center">{l}</div>)}
  </div>
);

const Row = ({ n }) => {
  const d = data[n];
  const under = n === 3 ? "border-b-[3px] border-b-black" : "";
  let a = "", b = "", c = "", cc = `border-r-2 border-b-2 ${LN}`;
  if (n === 1) a = "All Stocks (2018)";
  if (n === 3) { a = "Ticker"; b = "Total Daily Volume"; c = "Return"; }
  if (d) {
    a = d[0]; b = d[1]; c = d[2];
    cc = d[2][0] === "-" ? "bg-[#ee3524] justify-end" : "bg-[#76fb4b] justify-end";
  }
  const txt = "pt-[4px] flex items-center whitespace-nowrap";
  const bold = n === 3 ? "font-bold text-[20.800px]" : "";
  const sel = n === 19;
  return (
    <div className="h-[30px] shrink-0 flex text-[21px] text-black font-['Lato',sans-serif]">
      <div className={`w-[46px] shrink-0 flex items-center justify-center pr-[4px] pt-[2px] text-white font-medium text-[22px] border-b-2 border-[#666] ${sel ? "bg-[#595959] border-r-[3px] border-r-[#2f6e48]" : "bg-[#161616] border-r-2 border-r-[#161616]"}`}>{n}</div>
      <div className={`w-[130px] shrink-0 ${txt} pl-[4px] text-[20.200px] ${bold} border-b-2 ${LN} ${n === 1 ? "" : "border-r-2"} ${under}`}>{a}</div>
      <div className={`w-[187px] shrink-0 ${txt} pl-[4px] pr-[4px] ${bold} border-r-2 border-b-2 ${LN} ${d ? "justify-end" : ""} ${under}`}>{b}</div>
      <div className={`w-[131px] shrink-0 ${txt} pl-[5px] pr-[6px] text-[21.500px] ${bold} ${cc} ${under}`}>{c}</div>
      {LET.map((l) => <div key={l} className={`w-[130px] shrink-0 border-r-2 border-b-2 ${LN}`} />)}
    </div>
  );
};

const Sheet = () => (
  <div className="h-[1196px] shrink-0 bg-white overflow-hidden relative">
    {Array.from({ length: 40 }).map((_, i) => <Row key={i} n={i + 1} />)}
    <div className="absolute left-[362px] top-[539px] w-[133px] h-[34px] border-[3px] border-[#2f6e48]" />
    <div className="absolute left-[489px] top-[568px] w-[9px] h-[9px] bg-[#2f6e48] border border-white" />
    <div className="absolute left-[50px] top-[1176px] w-[2096px] h-[14px] rounded-full bg-[#cccccc]" />
    <div className="absolute left-[2862px] top-[2px] w-[13px] h-[800px] rounded-full bg-[#cccccc]" />
  </div>
);

/* ---------- tabs + status ---------- */
const Tabs = () => (
  <div className={`h-[53px] shrink-0 flex bg-[#363636] border-b-2 border-black text-[24px] ${UI}`}>
    <div className="w-[120px] shrink-0 flex items-center pl-[30px] gap-[31px]">
      <Svg w={14} h={26} vb="0 0 14 26"><path d="M14 0v26L0 13z" fill="#666" /></Svg>
      <Svg w={14} h={26} vb="0 0 14 26"><path d="M0 0v26l14-13z" fill="#666" /></Svg>
    </div>
    <div className="w-[522px] shrink-0 flex bg-[#222] text-[#6f6f6f]">
      <div className="w-[159px] border-l-2 border-[#555] h-[42px] pt-[5px] flex items-center justify-center">2017</div>
      <div className="w-[158px] border-l-2 border-[#555] h-[42px] pt-[5px] flex items-center justify-center">2018</div>
      <div className="w-[205px] border-l-2 border-[#555] h-[42px] pt-[5px] flex items-center justify-center">DQ Analysis</div>
    </div>
    <div className="w-[293px] h-[45px] pt-[3px] shrink-0 bg-white rounded-b-[6px] flex items-center justify-center font-semibold text-[#3c7a50]">All Stocks Analysis</div>
    <Svg w={22} h={22} className="ml-[28px] mt-[14px]" vb="0 0 22 22"><path d="M11 0v22M0 11h22" stroke="#8a8a8a" strokeWidth="4" /></Svg>
  </div>
);
const Status = () => (
  <div className={`h-[45px] shrink-0 flex items-center pl-[49px] pr-[44px] rounded-b-[10px] bg-[linear-gradient(#4a4a4a,#333)] ${UI}`}>
    <span className="text-[24px] text-[#e4e4e4]">Ready</span>
    <Svg w={30} h={28} className="ml-[42px]" vb="0 0 30 28"><circle cx="6" cy="6" r="5" fill="#fff" /><path d="M12 5h16v20l-4 2M9 11v12M2 23h16v3H2z" stroke="#fff" strokeWidth="2.500" /></Svg>
    <div className="ml-auto flex items-center">
      <Svg w={26} h={26} vb="0 0 26 26"><rect x="1" y="1" width="24" height="24" stroke="#fff" strokeWidth="2" /><path d="M9 1v24M17 1v24M1 9h24M1 17h24" stroke="#fff" strokeWidth="2" /></Svg>
      <Svg w={28} h={26} className="ml-[45px]" vb="0 0 28 26"><rect x="1" y="1" width="26" height="24" stroke="#fff" strokeWidth="2" /><rect x="6" y="5" width="16" height="16" stroke="#fff" strokeWidth="2" /><path d="M10 10h8M10 13h8M10 16h8" stroke="#fff" strokeWidth="2" /></Svg>
      <Svg w={27} h={26} className="ml-[44px]" vb="0 0 27 26"><path d="M1 1h25v24H1zM1 15h14V1" stroke="#fff" strokeWidth="2.400" /></Svg>
      <span className="ml-[39px] w-[16px] h-[4px] bg-white" />
      <span className="ml-[16px] w-[195px] h-[9px] rounded-full bg-[#777] relative">
        <span className="absolute left-[87px] top-[-7px] w-[22px] h-[22px] rounded-full bg-[#bdbdbd]" />
      </span>
      <Svg w={17} h={17} className="ml-[17px]" vb="0 0 17 17"><path d="M8.500 0v17M0 8.500h17" stroke="#fff" strokeWidth="4" /></Svg>
      <span className="ml-[34px] text-[24px] text-[#e4e4e4]">100%</span>
    </div>
  </div>
);

/* ---------- dialog ---------- */
const Dialog = () => (
  <div className={`absolute left-[1020px] top-[388px] w-[840px] h-[303px] rounded-[10px] bg-[#333] border-b-2 border-x-2 border-[#1d1d1d] shadow-[0_40px_90px_rgba(0,0,0,0.62)] ${UI}`}>
    <div className="h-[43px] rounded-t-[10px] border-t-2 border-[#6a6a6a] border-b-2 border-b-black bg-[linear-gradient(#484848,#3a3a3a)]" />
    <div className="flex">
      <div className="ml-[58px] mt-[45px]"><ExcelIco size={104} /></div>
      <div className="ml-[48px] pt-[33px] flex-1 relative h-[258px]">
        <div className="text-[26.500px] font-semibold leading-[32px] text-[#e6e6e6] whitespace-nowrap">Microsoft Excel</div>
        <div className="mt-[14px] text-[22.300px] leading-[30px] text-[#dcdcdc] whitespace-nowrap">This code ran in 0.140625 seconds for the year 2018</div>
        <div className="absolute right-[40px] bottom-[37px] w-[154px] h-[38px] rounded-[5px] bg-[#2a66d6] flex items-center justify-center text-[26px] text-[#eef3ff]">OK</div>
      </div>
    </div>
  </div>
);

export default function App() {
  return (
    <div className="relative w-[2880px] h-[1800px] overflow-hidden flex flex-col bg-[linear-gradient(90deg,#cbb070_0%,#cbb070_50%,#454545_50%)]">
      <MB />
      <div className="h-[2px] shrink-0 bg-[#39444a]" />
      <div className="w-[2878px] h-[1668px] shrink-0 flex flex-col rounded-[10px] overflow-hidden">
        <TitleBar />
        <Ribbon />
        <Formula />
        <div className="h-[5px] shrink-0 bg-[#d9d9d9] border-t border-[#9a9a9a]" />
        <HeaderRow />
        <Sheet />
        <Tabs />
        <Status />
      </div>
      <Dock />
      <Dialog />
    </div>
  );
}
